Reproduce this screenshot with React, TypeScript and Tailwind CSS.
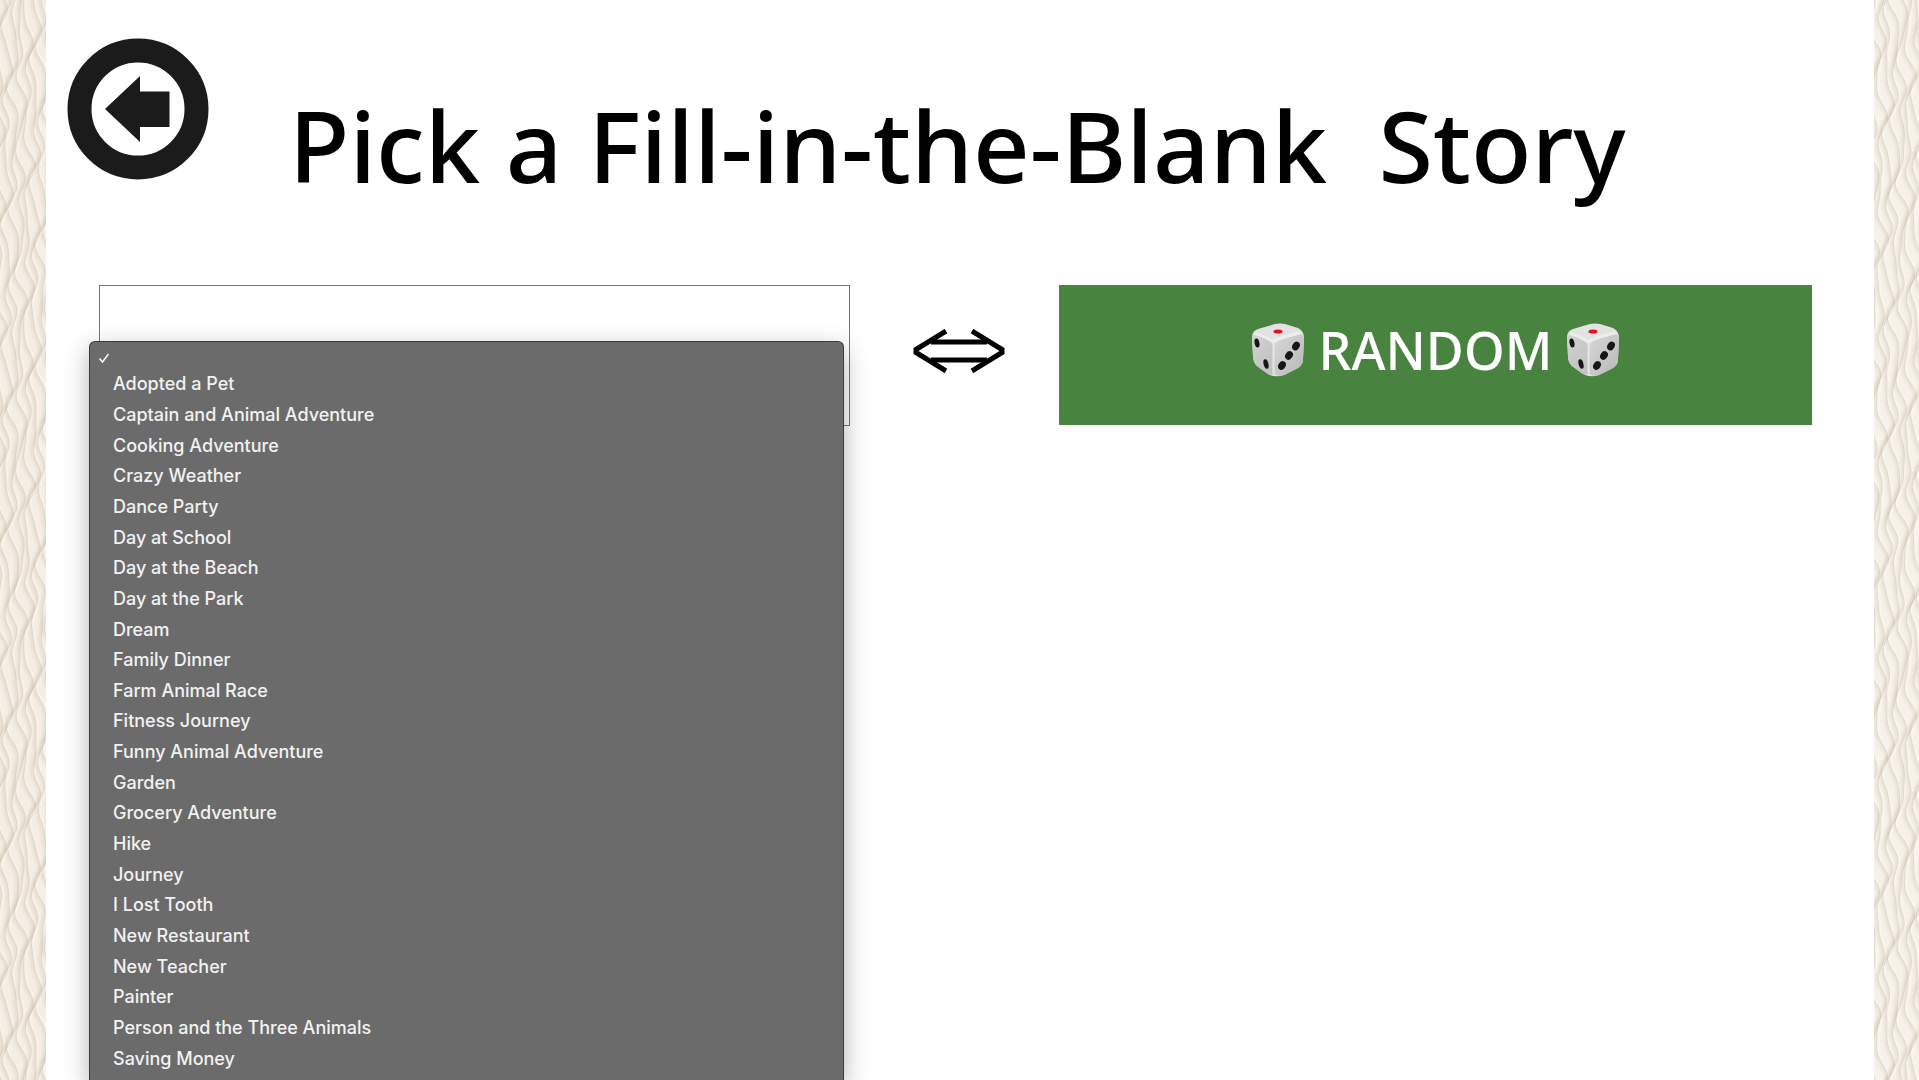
import { useState } from "react";

const STORIES = [
  "Adopted a Pet",
  "Captain and Animal Adventure",
  "Cooking Adventure",
  "Crazy Weather",
  "Dance Party",
  "Day at School",
  "Day at the Beach",
  "Day at the Park",
  "Dream",
  "Family Dinner",
  "Farm Animal Race",
  "Fitness Journey",
  "Funny Animal Adventure",
  "Garden",
  "Grocery Adventure",
  "Hike",
  "Journey",
  "I Lost Tooth",
  "New Restaurant",
  "New Teacher",
  "Painter",
  "Person and the Three Animals",
  "Saving Money",
];

const TILE = 320;

/** One wavy ridge; every sine has a whole number of periods in the tile so it repeats cleanly */
function ridge(index: number, seed: number) {
  const points: string[] = [];
  for (let y = 0; y <= TILE; y += 4) {
    const t = (y / TILE) * Math.PI * 2;
    const x =
      index * 7 +
      3.6 * Math.sin(5 * t + index * 0.9 + seed) +
      2.4 * Math.sin(3 * t + index * 2.3 + seed * 2) +
      1.6 * Math.sin(8 * t + index * 1.7);
    points.push(`${x.toFixed(1)} ${y}`);
  }
  return `M${points.join("L")}`;
}

/** Embossed sand ripples behind the white sheet */
function Ripples({ id, seed, base }: { id: string; seed: number; base: string }) {
  const ridges = [0, 1, 2, 3, 4, 5, 6, 7].map((i) => ridge(i, seed));
  return (
    <svg className="block h-full w-full" aria-hidden="true">
      <defs>
        <pattern id={id} width="48" height={TILE} patternUnits="userSpaceOnUse">
          <rect width="48" height={TILE} fill={base} />
          {ridges.map((d) => (
            <g key={d} fill="none" strokeLinejoin="round">
              <path d={d} stroke="#b9a88f" strokeOpacity="0.08" strokeWidth="5" transform="translate(-2 0)" />
              <path d={d} stroke="#b9a88f" strokeOpacity="0.1" strokeWidth="3" transform="translate(-1 0)" />
              <path d={d} stroke="#9c8e7a" strokeOpacity="0.13" strokeWidth="1" />
              <path d={d} stroke="#fffdf8" strokeOpacity="0.3" strokeWidth="2" transform="translate(2 0)" />
            </g>
          ))}
        </pattern>
      </defs>
      <rect width="100%" height="100%" fill={`url(#${id})`} />
    </svg>
  );
}

function BackIcon() {
  return (
    <svg viewBox="0 0 142 142" className="block size-[142px]" aria-hidden="true">
      <circle cx="71" cy="71" r="58.5" fill="none" stroke="#1b1b1b" strokeWidth="24" />
      <path d="M38 71 73 38V53.500H102.500V89H73V104Z" fill="#1b1b1b" />
    </svg>
  );
}

function Die({ id }: { id: string }) {
  return (
    <svg viewBox="0 0 54 54" className="block size-[54px]" aria-hidden="true">
      <defs>
        <linearGradient id={`${id}-left`} x1="0" y1="0" x2="0.6" y2="1">
          <stop offset="0" stopColor="#d2d2d2" />
          <stop offset="1" stopColor="#c2c2c2" />
        </linearGradient>
        <linearGradient id={`${id}-right`} x1="0" y1="0" x2="1" y2="1">
          <stop offset="0" stopColor="#d8d8d8" />
          <stop offset="1" stopColor="#b8b8b8" />
        </linearGradient>
      </defs>
      <path d="M1 14Q1 8 7 6L24 1Q29 0 34 1L47 5Q53 8 53 15L52 36Q52 42 47 45L33 52Q24 55 17 51L6 43Q2 39 2 33Z" fill="#e2e2e2" />
      <path d="M1 14Q2 10 8 12L17 16Q23 19 23 26V47Q23 53 17 51L6 43Q2 39 2 33Z" fill={`url(#${id}-left)`} />
      <path d="M23 26Q23 19 29 17L46 12Q53 10 53 16L52 36Q52 42 47 45L33 52Q23 55 23 47Z" fill={`url(#${id}-right)`} />
      <path d="M5 11Q16 14 22 19Q27 15 48 10" fill="none" stroke="#ededed" strokeWidth="3" strokeLinecap="round" strokeLinejoin="round" />
      <path d="M22.500 21V49" fill="none" stroke="#e6e6e6" strokeWidth="2" strokeLinecap="round" />
      <ellipse cx="27" cy="8.500" rx="4.500" ry="2" fill="#e3121a" />
      <g fill="#161616">
        <ellipse cx="6" cy="20" rx="2.400" ry="4.500" transform="rotate(-12 6 20)" />
        <ellipse cx="15" cy="41" rx="2.400" ry="4.800" transform="rotate(-14 15 41)" />
        <ellipse cx="45" cy="23" rx="3.600" ry="4.500" transform="rotate(30 45 23)" />
        <ellipse cx="38" cy="32.500" rx="3.600" ry="4.500" transform="rotate(35 38 32.500)" />
        <ellipse cx="31" cy="42.500" rx="3.600" ry="4.500" transform="rotate(30 31 42.500)" />
      </g>
    </svg>
  );
}

function DoubleArrow() {
  return (
    <svg viewBox="0 0 92 44" className="block h-11 w-[92px]" fill="none" stroke="#000" strokeWidth="5" aria-hidden="true">
      <path d="M33 2 3 20.500V23.500L33 42M59 2 89 20.500V23.500L59 42" />
      <path d="M18 13H74M18 31H74" />
    </svg>
  );
}

function StoryPicker() {
  const [story, setStory] = useState("");

  return (
    <div className="relative w-[751px] self-stretch">
      <button
        type="button"
        aria-label="Story"
        aria-haspopup="listbox"
        aria-expanded="true"
        className="block h-[141px] w-full border border-[#767676] bg-white"
      />
      <div
        role="listbox"
        aria-label="Stories"
        className="absolute top-14 right-[6px] bottom-0 -left-[10px] flex flex-col rounded-t-md border border-b-0 border-[#3c3c3c] bg-[#6b6b6b] pb-[6px] font-['Inter','Liberation_Sans',sans-serif] text-lg font-medium text-[#f2f2f2] shadow-[0_8px_24px_rgba(0,0,0,0.3)]"
      >
        <button
          type="button"
          role="option"
          aria-label="No story"
          aria-selected={story === ""}
          onClick={() => setStory("")}
          className="flex h-[27px] items-center px-2 pt-1"
        >
          <svg viewBox="0 0 12 12" className="size-3" fill="none" stroke="currentColor" strokeWidth="1.600" aria-hidden="true">
            <path d="M1.500 6.500 4.500 10 10.500 2" />
          </svg>
        </button>
        <div className="grid flex-1 auto-rows-fr">
          {STORIES.map((name) => (
            <button
              key={name}
              type="button"
              role="option"
              aria-selected={story === name}
              onClick={() => setStory(name)}
              className="flex items-center px-[23px] text-left leading-6"
            >
              {name}
            </button>
          ))}
        </div>
      </div>
    </div>
  );
}

export default function App() {
  return (
    <div className="flex h-screen overflow-hidden">
      <div className="w-[46px] shrink-0">
        <Ripples id="ripples-left" seed={0.6} base="#f4eee4" />
      </div>
      <main className="flex min-w-0 flex-1 flex-col bg-white font-['Noto_Sans','Open_Sans',sans-serif] font-medium">
        <header className="flex h-[285px] items-start px-[21px] pt-[38px]">
          <a href="#" aria-label="Back">
            <BackIcon />
          </a>
          <h1 className="ml-20 pt-9 text-[99px] leading-[142px] whitespace-pre text-black">
            {"Pick a Fill-in-the-Blank  Story"}
          </h1>
        </header>
        <div className="flex flex-1 items-start justify-between pr-[62px] pl-[53px]">
          <StoryPicker />
          <div className="pt-[44px] pl-2">
            <DoubleArrow />
          </div>
          <button
            type="button"
            className="flex h-[140px] w-[753px] items-start justify-center gap-[14px] bg-[#48843f] pt-[38px] text-[52px] leading-[54px] text-white"
          >
            <Die id="die-a" />
            RANDOM
            <Die id="die-b" />
          </button>
        </div>
      </main>
      <div className="w-[45px] shrink-0">
        <Ripples id="ripples-right" seed={2.1} base="#f6f2ea" />
      </div>
    </div>
  );
}
